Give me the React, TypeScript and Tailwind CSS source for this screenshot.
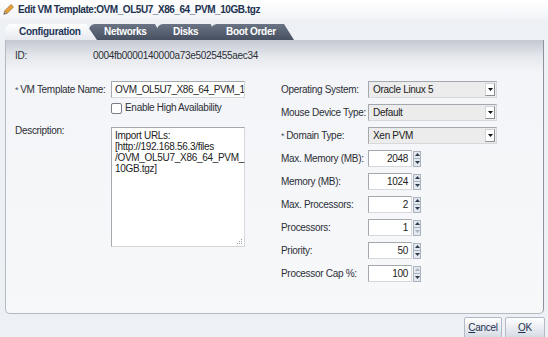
import type { ReactNode } from "react";

const label = "text-[#2b2f36] tracking-[-0.3px]";

function Star() {
  return <span className="mr-[2px] align-top text-[9px] text-[#4a5566]">*</span>;
}

function Select({ value }: { value: string }) {
  return (
    <div className="flex h-[17px] w-[129px] items-center border border-[#a4a9b0] border-b-[#d6d8dc] border-r-[#d6d8dc] bg-[#ececec] pl-[4px]">
      <span className="flex-1 tracking-[-0.3px] text-[#222]">{value}</span>
      <div className="mr-[1px] flex h-[13px] w-[10px] items-center justify-center border border-[#d0d3d8] border-b-[#8a8f96] border-r-[#8a8f96] bg-white">
        <svg width="5" height="3" viewBox="0 0 5 3">
          <path d="M0 0h5L2.5 3z" fill="#111" />
        </svg>
      </div>
    </div>
  );
}

function Spinner({ value, upOff, downOff }: { value: string; upOff?: boolean; downOff?: boolean }) {
  return (
    <div className="flex items-center gap-[1px]">
      <div className="flex h-[17px] w-[44px] items-center justify-end border border-[#a4a9b0] border-b-[#d6d8dc] border-r-[#d6d8dc] bg-white pr-[3px] tracking-[-0.3px] text-[#222]">
        {value}
      </div>
      <div className="flex h-[16px] w-[8px] flex-col border border-[#aab3c0] bg-[#e4e8ee]">
        <div className="flex flex-1 items-center justify-center border-b border-[#aab3c0]">
          <svg width="5" height="3" viewBox="0 0 5 3">
            <path d="M0 3h5L2.5 0z" fill={upOff ? "#aab4c2" : "#2d3b4e"} />
          </svg>
        </div>
        <div className="flex flex-1 items-center justify-center">
          <svg width="5" height="3" viewBox="0 0 5 3">
            <path d="M0 0h5L2.5 3z" fill={downOff ? "#aab4c2" : "#2d3b4e"} />
          </svg>
        </div>
      </div>
    </div>
  );
}

function Row({ name, star, children }: { name: string; star?: boolean; children: ReactNode }) {
  return (
    <div className="flex h-[23px] items-center">
      <div className={`w-[87px] ${label}`}>
        {star && <Star />}
        {name}
      </div>
      {children}
    </div>
  );
}

function Tab({ text, active, cls }: { text: string; active?: boolean; cls: string }) {
  return (
    <div
      className={`flex h-[16px] items-center rounded-tl-[6px] font-bold tracking-[-0.3px] [clip-path:polygon(0_0,88%_0,100%_100%,0_100%)] ${cls} ${
        active
          ? "bg-gradient-to-b from-white to-[#e6e9ef] text-[#1e3657]"
          : "bg-gradient-to-b from-[#6b7484] to-[#465061] text-white"
      }`}
    >
      {text}
    </div>
  );
}

export default function App() {
  return (
    <div className="h-[337px] w-[548px] overflow-hidden bg-[#edf0f5] font-['Liberation_Sans',Arial,sans-serif] text-[10px] leading-[12px]">
      <div className="flex h-[19px] items-center gap-[4px] bg-gradient-to-b from-white to-[#f2f4f8] pl-[3px]">
        <svg width="11" height="11" viewBox="0 0 11 11">
          <path d="M8 0.5l2.5 2.5-6.5 6.5-2.5-2.5z" fill="#e9a23b" stroke="#8a5a14" strokeWidth="0.6" />
          <path d="M1.5 7l2.5 2.5-3.2 0.8z" fill="#f3d9a8" stroke="#6b5a3a" strokeWidth="0.5" />
          <path d="M0.8 10.3l0.6-1.8 1.2 1.2z" fill="#333" />
        </svg>
        <span className="text-[10px] font-bold tracking-[-0.45px] text-[#1e3250]">
          Edit VM Template:OVM_OL5U7_X86_64_PVM_10GB.tgz
        </span>
      </div>

      <div className="ml-[5px] mt-[5px] flex h-[16px]">
        <Tab text="Configuration" active cls="relative z-40 w-[92px] pl-[14px]" />
        <Tab text="Networks" cls="relative z-30 -ml-[8px] w-[75px] pl-[15px]" />
        <Tab text="Disks" cls="relative z-20 -ml-[7px] w-[61px] pl-[16px]" />
        <Tab text="Boot Order" cls="relative z-10 -ml-[7px] w-[83px] pl-[15px]" />
      </div>

      <div className="ml-[5px] h-[274px] w-[539px] rounded-b-[5px] border border-t-0 border-[#b4b9c2] border-r-[#8d939c] bg-[linear-gradient(to_bottom,#c4c8d1_0px,#e4e7ec_16px,#f4f5f8_32px,#f7f8fa_100%)] pl-[9px]">
        <div className={`flex pt-[10px] ${label}`}>
          <span className="w-[78px]">ID:</span>
          <span>0004fb0000140000a73e5025455aec34</span>
        </div>

        <div className="mt-[16px] flex">
          <div className="w-[230px]">
            <div className="flex h-[23px] items-center">
              <div className={`w-[96px] ${label}`}>
                <Star />
                VM Template Name:
              </div>
              <div className="flex h-[17px] w-[134px] items-center overflow-hidden whitespace-nowrap border border-[#a4a9b0] border-b-[#d6d8dc] border-r-[#d6d8dc] bg-white pl-[3px] tracking-[-0.4px] text-[#222]">
                OVM_OL5U7_X86_64_PVM_1
              </div>
            </div>
            <div className="flex h-[14px] items-center gap-[3px] pl-[96px]">
              <div className="h-[11px] w-[11px] rounded-[2px] border border-[#7a7f86] bg-white" />
              <span className={label}>Enable High Availability</span>
            </div>
            <div className="mt-[10px] flex items-start">
              <div className={`w-[96px] ${label}`}>Description:</div>
              <div className="relative mt-[2px] h-[120px] w-[134px] border border-[#a4a9b0] border-b-[#d6d8dc] border-r-[#d6d8dc] bg-white pl-[3px] pt-[2px] leading-[11px] tracking-[-0.3px] text-[#222]">
                <div>Import URLs:</div>
                <div>[http://192.168.56.3/files</div>
                <div>/OVM_OL5U7_X86_64_PVM_</div>
                <div>10GB.tgz]</div>
                <svg className="absolute bottom-[1px] right-[1px]" width="7" height="7" viewBox="0 0 7 7">
                  <g fill="#9a9a9a">
                    <rect x="5" y="1" width="1" height="1" />
                    <rect x="3" y="3" width="1" height="1" />
                    <rect x="5" y="3" width="1" height="1" />
                    <rect x="1" y="5" width="1" height="1" />
                    <rect x="3" y="5" width="1" height="1" />
                    <rect x="5" y="5" width="1" height="1" />
                  </g>
                </svg>
              </div>
            </div>
          </div>

          <div className="ml-[36px]">
            <Row name="Operating System:">
              <Select value="Oracle Linux 5" />
            </Row>
            <Row name="Mouse Device Type:">
              <Select value="Default" />
            </Row>
            <Row name="Domain Type:" star>
              <Select value="Xen PVM" />
            </Row>
            <Row name="Max. Memory (MB):">
              <Spinner value="2048" />
            </Row>
            <Row name="Memory (MB):">
              <Spinner value="1024" />
            </Row>
            <Row name="Max. Processors:">
              <Spinner value="2" />
            </Row>
            <Row name="Processors:">
              <Spinner value="1" downOff />
            </Row>
            <Row name="Priority:">
              <Spinner value="50" />
            </Row>
            <Row name="Processor Cap %:">
              <Spinner value="100" upOff />
            </Row>
          </div>
        </div>
      </div>

      <div className="mr-[3px] mt-[3px] flex justify-end gap-[3px]">
        <button className="h-[22px] w-[38px] rounded-[2px] border border-[#b3bac6] bg-gradient-to-b from-white to-[#d4d9e3] tracking-[-0.3px] text-[#1e3250]">
          <span className="underline">C</span>ancel
        </button>
        <button className="h-[22px] w-[40px] rounded-[2px] border border-[#b3bac6] bg-gradient-to-b from-white to-[#d4d9e3] tracking-[-0.3px] text-[#1e3250]">
          <span className="underline">O</span>K
        </button>
      </div>
    </div>
  );
}
